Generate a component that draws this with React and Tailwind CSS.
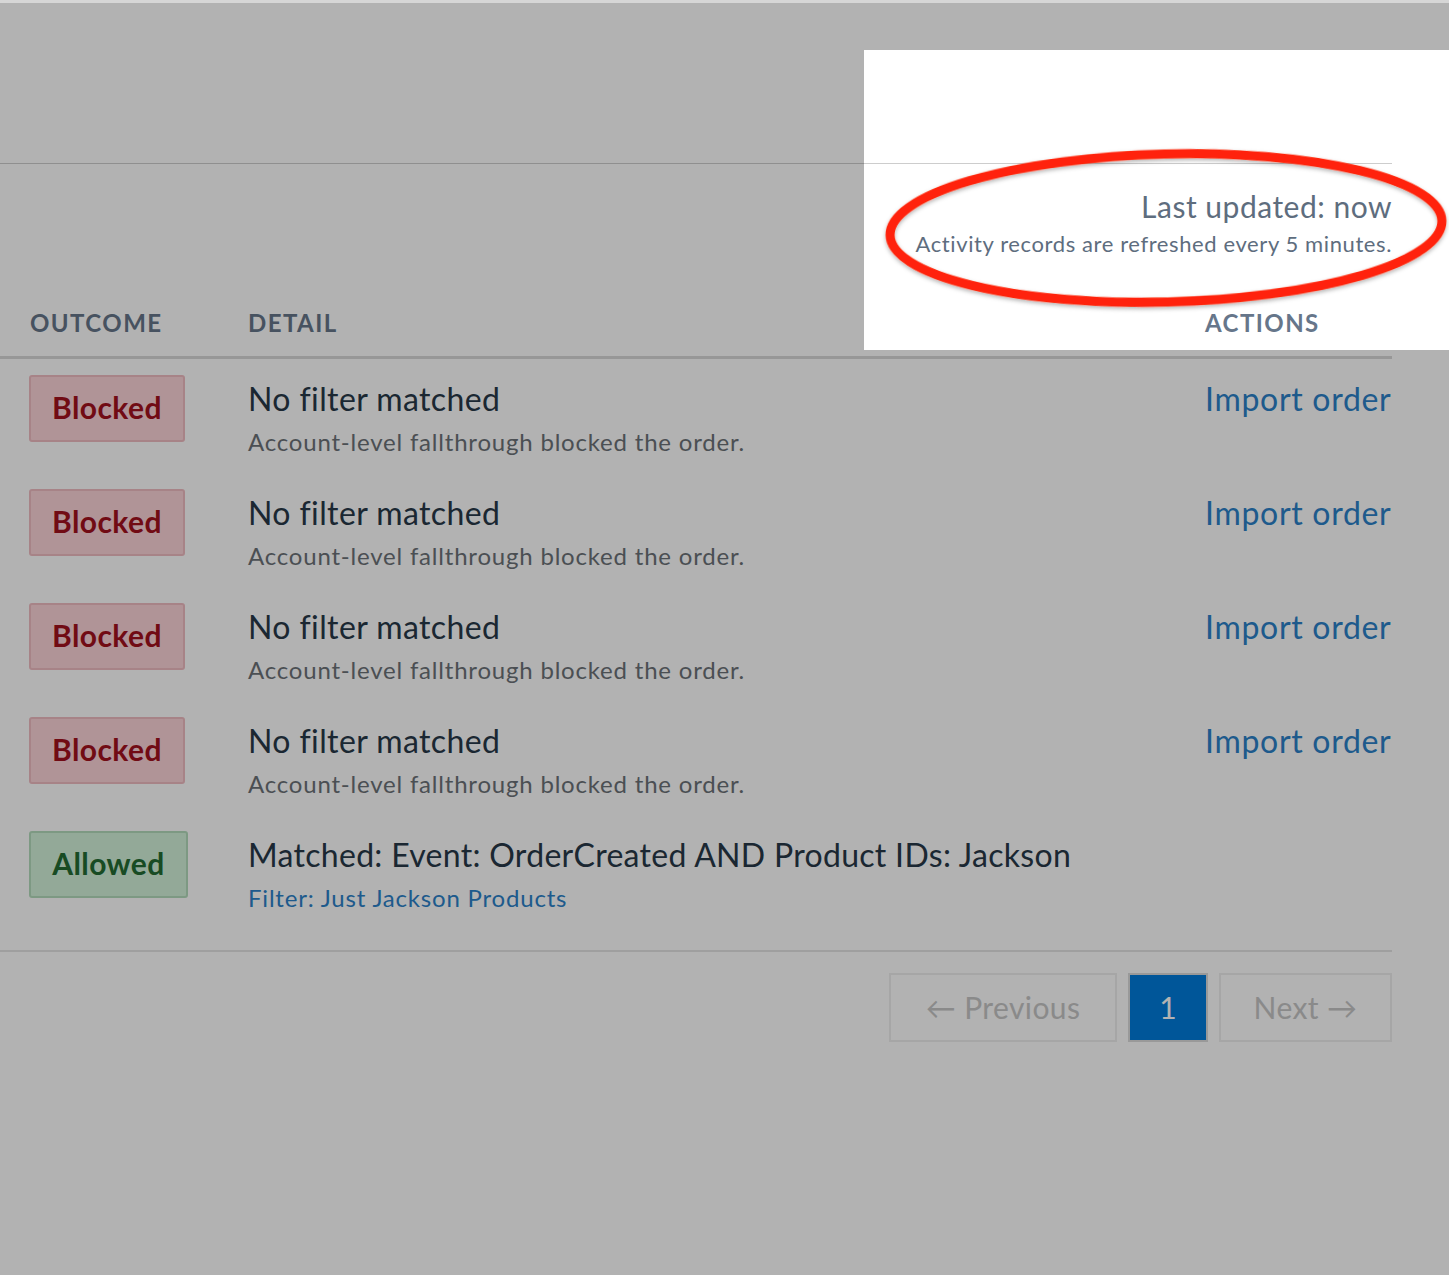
import React from "react";

// activity log rows
const rows = [
  { outcome: "blocked", title: "No filter matched", sub: "Account-level fallthrough blocked the order.", action: "Import order" },
  { outcome: "blocked", title: "No filter matched", sub: "Account-level fallthrough blocked the order.", action: "Import order" },
  { outcome: "blocked", title: "No filter matched", sub: "Account-level fallthrough blocked the order.", action: "Import order" },
  { outcome: "blocked", title: "No filter matched", sub: "Account-level fallthrough blocked the order.", action: "Import order" },
  { outcome: "allowed", title: "Matched: Event: OrderCreated AND Product IDs: Jackson", filter: "Filter: Just Jackson Products" },
];

const Badge = ({ outcome }) =>
  outcome === "blocked" ? (
    <span className="inline-flex h-[67px] w-[156px] items-center justify-center rounded-[3px] border-2 border-[#f0bcc2] bg-[#fcd4d9] pb-[2px] text-[30px] font-bold tracking-[0.4px] text-[#a3101d]">
      Blocked
    </span>
  ) : (
    <span className="inline-flex h-[67px] w-[159px] items-center justify-center rounded-[3px] border-2 border-[#b4dcbc] bg-[#d3f2da] pb-[2px] text-[30px] font-bold tracking-[0.4px] text-[#236c33]">
      Allowed
    </span>
  );

export default function App() {
  return (
    <div
      className="relative min-h-[1275px] w-[1449px] overflow-hidden border-t-[3px] border-[#d6d6d6] bg-white"
      style={{ fontFamily: "Lato, 'Noto Sans', sans-serif" }}
    >
      <div className="w-[1392px]">
        <div className="h-[160px]" />

        {/* LAST UPDATED */}
        <div className="border-t border-[#cdcdcd] pt-[22px] text-right text-[#5e6d7e]">
          <p className="text-[30px] leading-[40px] tracking-[0.5px]">Last updated: now</p>
          <p className="text-[22px] leading-[36px] tracking-[0.6px]">Activity records are refreshed every 5 minutes.</p>
        </div>

        {/* TABLE HEAD */}
        <div className="grid grid-cols-[248px_1fr_187px] border-b-[3px] border-[#d8d8d8] pb-[17px] pt-[45px] text-[24px] font-bold uppercase leading-[32px] tracking-[0.06em] text-[#66768a]">
          <div className="pl-[30px]">Outcome</div>
          <div>Detail</div>
          <div>Actions</div>
        </div>

        {/* ROWS */}
        <div>
          {rows.map((r, i) => (
            <div key={i} className="grid grid-cols-[248px_1fr_187px] pb-[12px] pt-[16px]">
              <div className="pl-[29px]">
                <Badge outcome={r.outcome} />
              </div>
              <div>
                {r.sub ? (
                  <p className="text-[32px] leading-[48px] tracking-[0.4px] text-[#283848]">{r.title}</p>
                ) : (
                  <p className="text-[32px] leading-[48px] tracking-[0.3px] text-[#283848]">{r.title}</p>
                )}
                {r.sub && <p className="text-[24px] leading-[38px] tracking-[0.8px] text-[#6c7278]">{r.sub}</p>}
                {r.filter && <p className="text-[24px] leading-[38px] tracking-[0.8px] text-[#2c82c9]">{r.filter}</p>}
              </div>
              <div>
                {r.action && <a className="text-[32px] leading-[48px] tracking-[0.7px] text-[#2c82c9]">{r.action}</a>}
              </div>
            </div>
          ))}
        </div>

        {/* PAGINATION */}
        <div className="mt-[21px] flex justify-end gap-[11px] border-t-2 border-[#e4e4e4] pt-[21px]">
          <button className="h-[69px] w-[228px] border-2 border-[#eeeeee] text-[30px] tracking-[0.4px] text-[#c6c6c6]">
            ← Previous
          </button>
          <button className="h-[69px] w-[80px] border-2 border-[#dcdcdc] bg-[#007cdc] text-[30px] text-white">
            1
          </button>
          <button className="h-[69px] w-[173px] border-2 border-[#eeeeee] text-[30px] tracking-[0.4px] text-[#c6c6c6]">
            Next →
          </button>
        </div>
      </div>

      {/* spotlight overlay */}
      <div className="pointer-events-none absolute left-[864px] top-[47px] z-10 h-[300px] w-[600px] shadow-[0_0_0_3000px_rgba(0,0,0,0.3)]" />

      {/* red annotation */}
      <svg className="pointer-events-none absolute left-0 top-0 z-20" width="1449" height="1275">
        <defs>
          <filter id="sh" x="-10%" y="-20%" width="120%" height="140%">
            <feDropShadow dx="0" dy="2" stdDeviation="2" floodColor="#000" floodOpacity="0.3" />
          </filter>
        </defs>
        <ellipse
          cx="1166"
          cy="225"
          rx="276"
          ry="74"
          fill="none"
          stroke="#ff2307"
          strokeWidth="9"
          transform="rotate(-1.5 1166 225)"
          filter="url(#sh)"
        />
      </svg>
    </div>
  );
}
